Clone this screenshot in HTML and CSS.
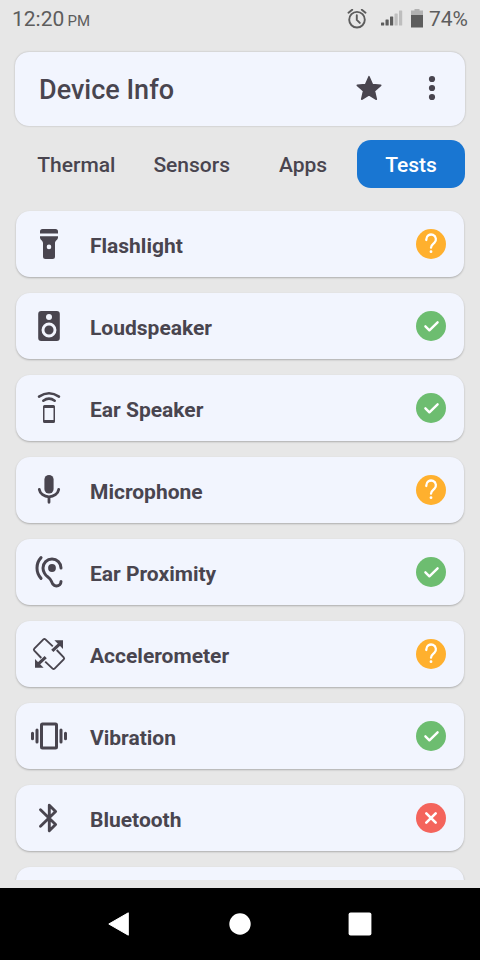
FILE: index.html
```html
<!DOCTYPE html>
<html lang="en">
<head>
<meta charset="utf-8">
<meta name="viewport" content="width=device-width, initial-scale=1">
<title>Device Info</title>
<link rel="stylesheet" href="styles.css">
</head>
<body>
<svg class="defs" aria-hidden="true">
  <symbol id="unknown" viewBox="0 0 30 30">
    <circle cx="15" cy="15" r="15" fill="#ffb02e"/>
    <path d="M10.300 11V10.400a4.800 4.800 0 1 1 8 3.500c-1.700 1.500-3.300 2.300-3.300 4.800" fill="none" stroke="#fff" stroke-width="2.300" stroke-linecap="round"/>
    <circle cx="15" cy="22.700" r="1.400" fill="#fff"/>
  </symbol>
  <symbol id="passed" viewBox="0 0 30 30">
    <circle cx="15" cy="15" r="15" fill="#6dbd70"/>
    <path d="M9.400 15.300l4 4 8.200-8" fill="none" stroke="#fff" stroke-width="2.400" stroke-linecap="round" stroke-linejoin="round"/>
  </symbol>
  <symbol id="failed" viewBox="0 0 30 30">
    <circle cx="15" cy="15" r="15" fill="#f4645c"/>
    <path d="M10.300 10.300l9.400 9.400M19.700 10.300l-9.400 9.400" fill="none" stroke="#fff" stroke-width="2.600" stroke-linecap="round"/>
  </symbol>
</svg>

<div class="status">
  <div class="clock">12:20 <small>PM</small></div>
  <div class="indicators">
    <svg class="alarm" width="20" height="20" viewBox="0 0 20 20" fill="none" stroke="currentColor" stroke-width="1.900" stroke-linecap="round" aria-hidden="true"><circle cx="10" cy="10.700" r="7.800"/><path d="M9.800 6.200v4.700l3 3M1.500 3.700l3.700-3M18.500 3.700l-3.700-3"/></svg>
    <svg class="signal" width="22" height="16" viewBox="0 0 22 16" fill="currentColor" aria-hidden="true"><rect y="11.500" width="3.200" height="3" rx=".6"/><rect x="4.500" y="8.500" width="3.200" height="6" rx=".6"/><rect x="9" y="5.500" width="3.200" height="9" rx=".6"/><g fill="#bebebe"><rect x="13.500" y="2.500" width="3.200" height="12" rx=".6"/><rect x="18" y="-.5" width="3.200" height="15" rx=".6"/></g></svg>
    <svg class="battery" width="12" height="20" viewBox="0 0 12 20" aria-hidden="true"><path d="M3.500 0h5v1.500H12V7H0V1.500h3.500z" fill="#b2b2b2"/><path d="M0 6h12v12.500H0z" fill="currentColor"/></svg>
    <span>74%</span>
  </div>
</div>

<header class="appbar">
  <h1>Device Info</h1>
  <button type="button" aria-label="Favorite"><svg width="28" height="28" viewBox="0 0 28 28" aria-hidden="true"><path d="M14 1.700l3.400 7.800 8.300.8-6.300 5.600 1.900 8.300-7.300-4.400-7.300 4.400 1.900-8.300-6.300-5.600 8.300-.8z" fill="currentColor" stroke="currentColor" stroke-width="1.600" stroke-linejoin="round"/></svg></button>
  <button type="button" aria-label="More options"><svg width="28" height="28" viewBox="0 0 28 28" fill="currentColor" aria-hidden="true"><circle cx="14" cy="4" r="3.100"/><circle cx="14" cy="13" r="3.100"/><circle cx="14" cy="22" r="3.100"/></svg></button>
</header>

<nav class="tabs">
  <a href="#thermal">Thermal</a>
  <a href="#sensors">Sensors</a>
  <a href="#apps">Apps</a>
  <a href="#tests" class="active" aria-current="page">Tests</a>
</nav>

<main class="tests">
  <button type="button" class="card">
    <svg class="icon" viewBox="0 0 40 40" aria-hidden="true"><path d="M11 9.400V7.500A2.500 2.500 0 0 1 13.500 5h13A2.500 2.500 0 0 1 29 7.500v1.900zM11 12.200h18v1.300c0 2.300-3 3.200-3 5.500v13.500a2.500 2.500 0 0 1-2.500 2.500h-7a2.500 2.500 0 0 1-2.500-2.500V19c0-2.300-3-3.200-3-5.500zM20 20.600a2.300 2.300 0 1 0 0 4.600 2.300 2.300 0 0 0 0-4.600z" fill="currentColor" fill-rule="evenodd"/></svg>
    <span>Flashlight</span>
    <svg class="badge" role="img" aria-label="Not tested"><use href="#unknown"/></svg>
  </button>
  <button type="button" class="card">
    <svg class="icon" viewBox="0 0 40 40" aria-hidden="true"><rect x="9.200" y="5" width="21.600" height="30" rx="3" fill="currentColor"/><circle cx="20" cy="11" r="3" fill="#f2f5fe"/><circle cx="20" cy="24" r="6" fill="none" stroke="#f2f5fe" stroke-width="2.900"/></svg>
    <span>Loudspeaker</span>
    <svg class="badge" role="img" aria-label="Passed"><use href="#passed"/></svg>
  </button>
  <button type="button" class="card">
    <svg class="icon" viewBox="0 0 40 40" fill="none" stroke="currentColor" stroke-linecap="round" aria-hidden="true"><path d="M10 8.600q10-6.800 20 0M14.300 12.800q5.700-4.400 11.400 0" stroke-width="2.500"/><path d="M15.500 17h9a1.500 1.500 0 0 1 1.500 1.500v15a1.500 1.500 0 0 1-1.500 1.500h-9a1.500 1.500 0 0 1-1.500-1.500v-15a1.500 1.500 0 0 1 1.500-1.500zM15.500 20v12h9V20z" fill="currentColor" stroke="none" fill-rule="evenodd"/></svg>
    <span>Ear Speaker</span>
    <svg class="badge" role="img" aria-label="Passed"><use href="#passed"/></svg>
  </button>
  <button type="button" class="card">
    <svg class="icon" viewBox="0 0 40 40" aria-hidden="true"><rect x="15.400" y="5" width="9.200" height="18.500" rx="4.600" fill="currentColor"/><path d="M10.300 19.500a9.800 8.500 0 0 0 19.400 0M20 27.500v4.800" fill="none" stroke="currentColor" stroke-width="2.800" stroke-linecap="round"/></svg>
    <span>Microphone</span>
    <svg class="badge" role="img" aria-label="Not tested"><use href="#unknown"/></svg>
  </button>
  <button type="button" class="card">
    <svg class="icon" viewBox="0 0 40 40" aria-hidden="true"><g transform="translate(2 2.500) scale(1.500)" fill="none" stroke="currentColor" stroke-width="2" stroke-linecap="round"><path d="M20 9A6 6 0 0 0 8 9c0 1.100.35 2.300.95 3.400.8 1.500 1.750 2.200 2.600 2.850.9.700 1.600 1.300 2 2.500.55 1.700 1.150 2.400 2 2.850.4.200.9.400 1.450.4a3 3 0 0 0 3-3M6.700 2.100C5 3.900 4 6.300 4 9s1 5.100 2.700 6.900"/><circle cx="14" cy="9" r="2.600" fill="currentColor" stroke="none"/></g></svg>
    <span>Ear Proximity</span>
    <svg class="badge" role="img" aria-label="Passed"><use href="#passed"/></svg>
  </button>
  <button type="button" class="card">
    <svg class="icon" viewBox="0 0 40 40" fill="none" stroke="currentColor" stroke-width="1.900" aria-hidden="true"><path d="M12.300 24l-7-7.400q-.9-1 0-2l9.100-9.200q1-.9 2 0l7.400 7M27.700 16l7 7.400q.9 1 0 2l-9.100 9.200q-1 .9-2 0l-7.400-7"/><path d="M23.300 16.800l7-6.500M16.700 23.200l-7 6.500" stroke-width="3.200"/><path d="M25.400 6.300H34v8.600zM14.600 33.700H6v-8.600z" fill="currentColor" stroke="none"/></svg>
    <span>Accelerometer</span>
    <svg class="badge" role="img" aria-label="Not tested"><use href="#unknown"/></svg>
  </button>
  <button type="button" class="card">
    <svg class="icon" viewBox="0 0 40 40" fill="none" stroke="currentColor" stroke-width="3" stroke-linecap="round" aria-hidden="true"><rect x="12.500" y="8" width="15" height="24" rx="1"/><path d="M3.500 17.200v5.600M8 14v12M32 14v12M36.500 17.200v5.600"/></svg>
    <span>Vibration</span>
    <svg class="badge" role="img" aria-label="Passed"><use href="#passed"/></svg>
  </button>
  <button type="button" class="card">
    <svg class="icon" viewBox="0 0 40 40" fill="none" stroke="currentColor" stroke-width="2.900" stroke-linecap="round" stroke-linejoin="round" aria-hidden="true"><path d="M11.500 11.800L26.600 26.500 20.300 32.700V7.300L26.600 13.500 11.500 28.200"/></svg>
    <span>Bluetooth</span>
    <svg class="badge" role="img" aria-label="Failed"><use href="#failed"/></svg>
  </button>
  <div class="card"></div>
</main>

<footer class="navbar">
  <button type="button" aria-label="Back"><svg width="24" height="24" viewBox="0 0 24 24" aria-hidden="true"><path d="M.8 12L20.300.8V23.200z" fill="#fff" stroke="#fff" stroke-linejoin="round"/></svg></button>
  <button type="button" aria-label="Home"><svg width="24" height="24" viewBox="0 0 24 24" aria-hidden="true"><circle cx="12" cy="12" r="10.700" fill="#fff"/></svg></button>
  <button type="button" aria-label="Recent apps"><svg width="24" height="24" viewBox="0 0 24 24" aria-hidden="true"><rect x=".6" y=".6" width="22.800" height="22.800" rx="2" fill="#fff"/></svg></button>
</footer>
</body>
</html>
```
FILE: styles.css
```css
* {
  box-sizing: border-box;
}

body {
  margin: 0;
  height: 100vh;
  display: flex;
  flex-direction: column;
  background: #e7e7e7;
  color: #49454f;
  font-family: Roboto, "Liberation Sans", sans-serif;
  font-weight: 500;
}

button {
  margin: 0;
  padding: 0;
  border: 0;
  background: none;
  color: inherit;
  font: inherit;
  cursor: pointer;
}

svg {
  display: block;
  flex: none;
}

.defs {
  width: 0;
  height: 0;
  position: absolute;
}

.status {
  flex: none;
  height: 38px;
  padding: 0 12px;
  display: flex;
  align-items: center;
  justify-content: space-between;
  color: #5d5d5d;
  font-size: 21px;
  font-weight: 400;
}

.clock small {
  font-size: 15px;
  margin-left: -2px;
}

.indicators {
  display: flex;
  align-items: center;
}

.signal {
  margin-left: 14px;
  overflow: visible;
}

.battery {
  margin: 0 6px 0 8px;
}

.appbar {
  flex: none;
  height: 74px;
  margin: 14px 15px;
  padding: 0 19px 0 24px;
  display: flex;
  align-items: center;
  gap: 35px;
  border-radius: 14px;
  background: #f2f5fe;
  box-shadow: 0 0 2px rgba(0, 0, 0, 0.25);
}

.appbar h1 {
  flex: 1;
  margin: 0;
  padding-top: 2px;
  font-size: 27px;
  font-weight: 500;
}

.tabs {
  flex: none;
  margin: 0 15px;
  display: flex;
  justify-content: flex-end;
}

.tabs a {
  height: 48px;
  min-width: 108px;
  padding: 2px 19px 0;
  display: flex;
  align-items: center;
  justify-content: center;
  border-radius: 14px;
  color: inherit;
  font-size: 21px;
  text-decoration: none;
}

.tabs .active {
  background: #1976d2;
  color: #fff;
}

.tests {
  flex: 1;
  min-height: 0;
  margin: 15px 0 8px;
  padding: 8px 16px 0;
  display: flex;
  flex-direction: column;
  gap: 16px;
  overflow: hidden;
}

.card {
  flex: none;
  height: 66px;
  padding: 0 18px 0 13px;
  display: flex;
  align-items: center;
  border-radius: 14px;
  background: #f2f5fe;
  box-shadow: 0 1px 2px rgba(0, 0, 0, 0.25);
  font-size: 21px;
  font-weight: 700;
  text-align: left;
}

.card span {
  flex: 1;
  padding: 3px 21px 0;
}

.icon {
  width: 40px;
  height: 40px;
}

.badge {
  width: 30px;
  height: 30px;
}

.navbar {
  flex: none;
  height: 72px;
  display: flex;
  align-items: center;
  justify-content: center;
  gap: 96px;
  background: #000;
}
```
